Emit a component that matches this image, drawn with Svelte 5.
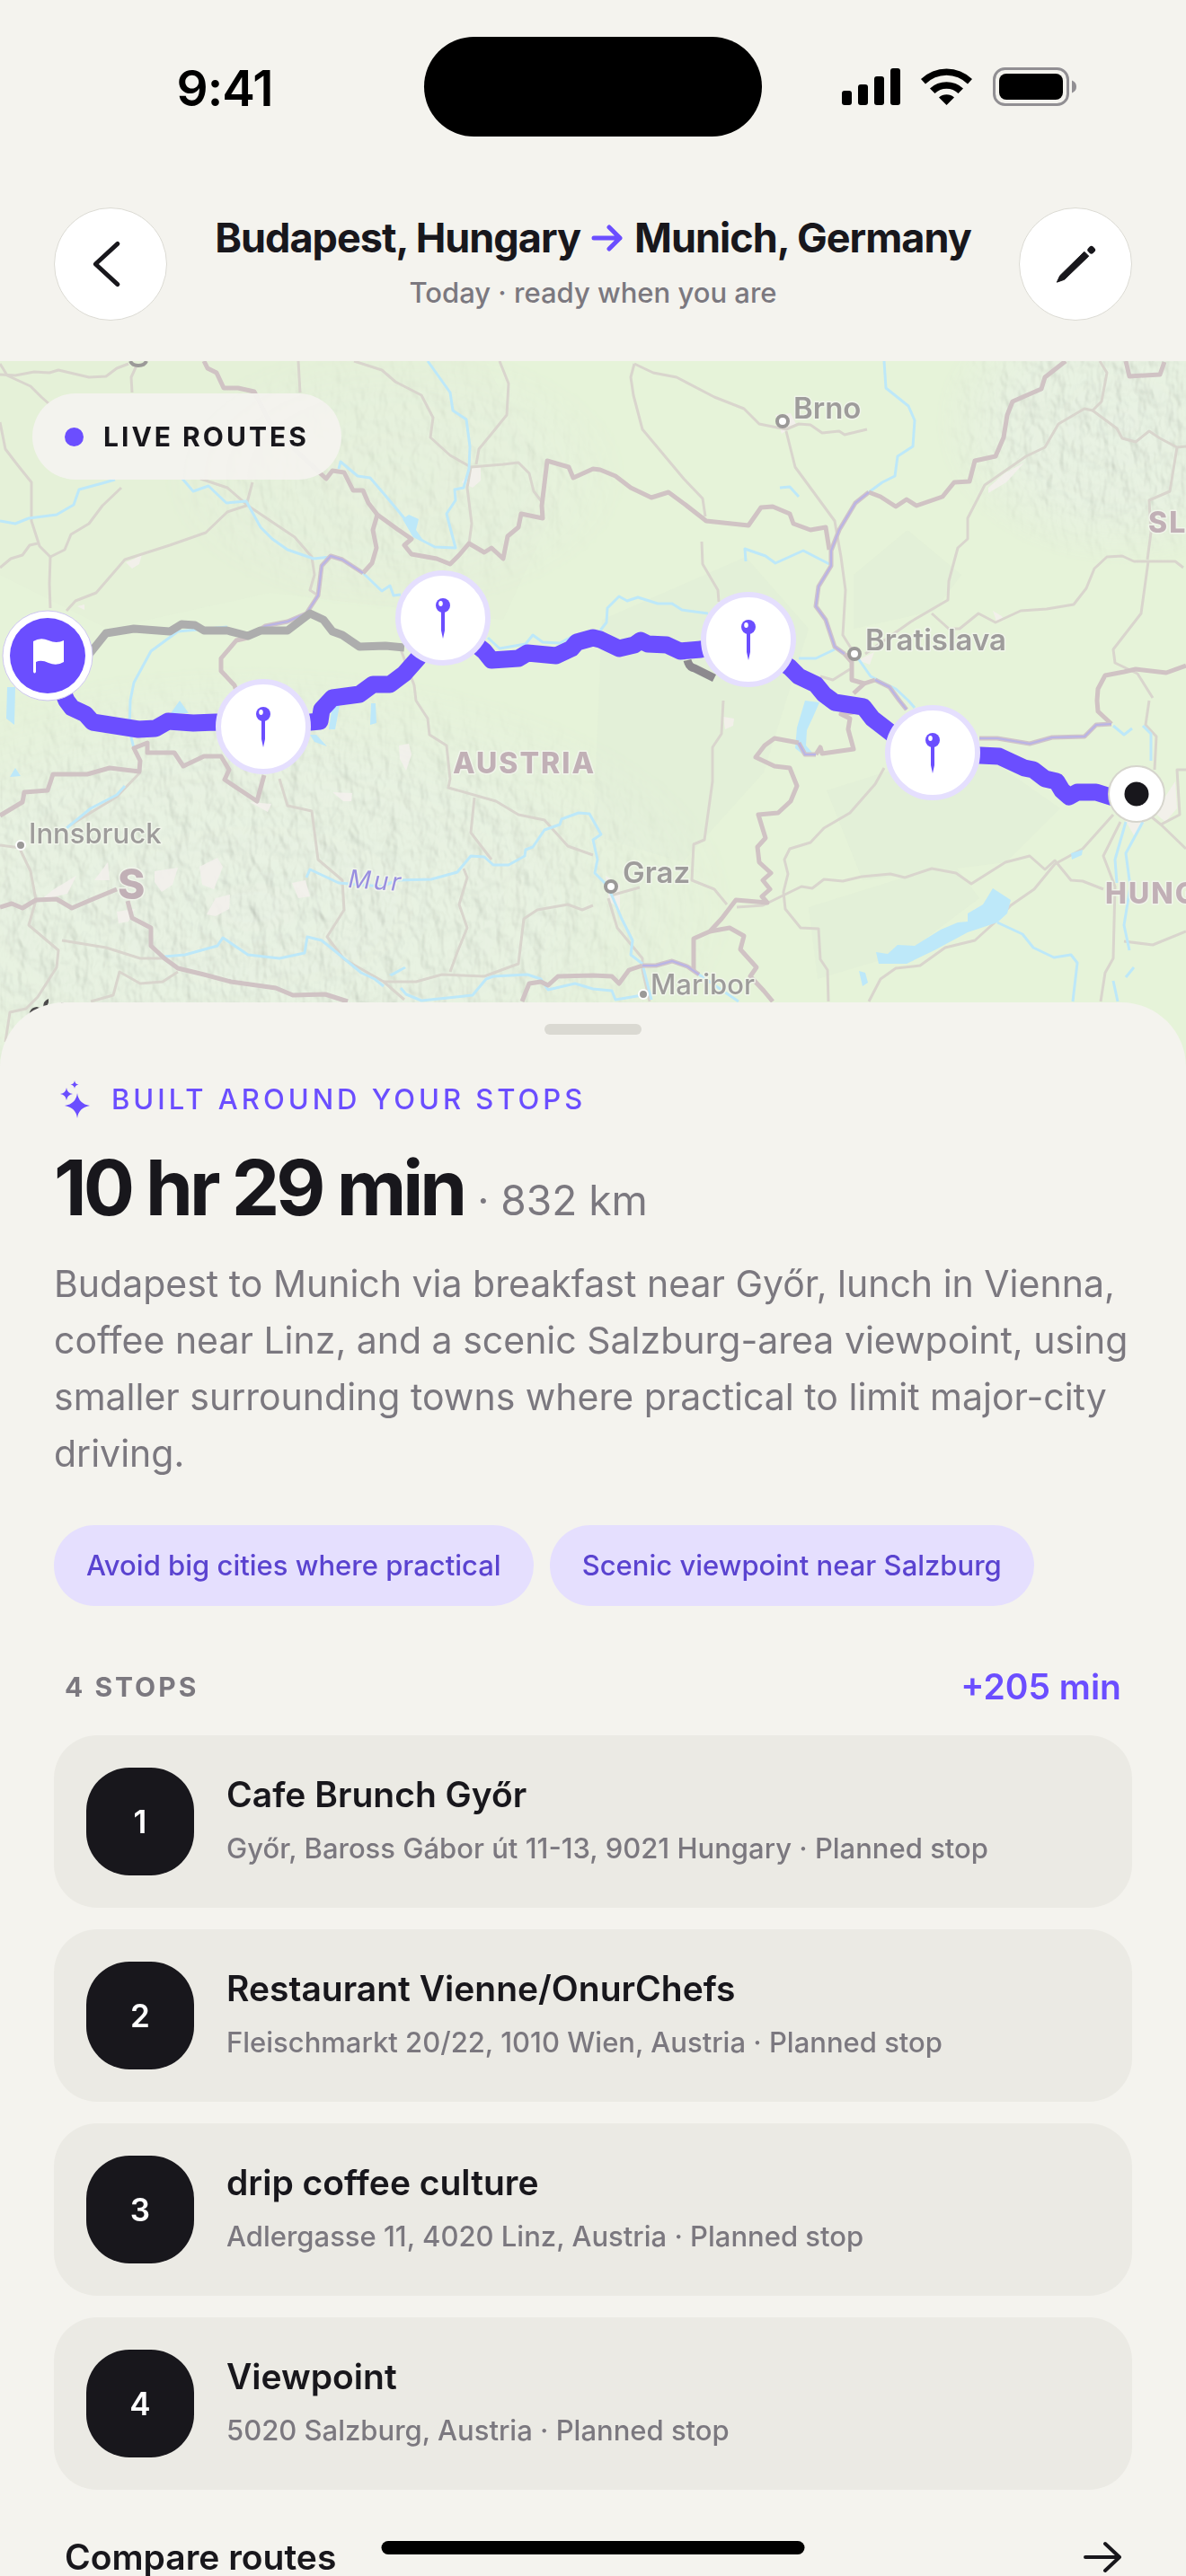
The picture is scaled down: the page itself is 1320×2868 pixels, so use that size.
<script lang="ts">
    type Stop = { name: string; detail: string };
    type Place = { name: string; x: number; y: number; dx: number; dy: number; capital: boolean };

    const from = "Budapest, Hungary";
    const to = "Munich, Germany";

    const chips: string[] = ["Avoid big cities where practical", "Scenic viewpoint near Salzburg"];

    const stops: Stop[] = [
        { name: "Cafe Brunch Győr", detail: "Győr, Baross Gábor út 11-13, 9021 Hungary · Planned stop" },
        { name: "Restaurant Vienne/OnurChefs", detail: "Fleischmarkt 20/22, 1010 Wien, Austria · Planned stop" },
        { name: "drip coffee culture", detail: "Adlergasse 11, 4020 Linz, Austria · Planned stop" },
        { name: "Viewpoint", detail: "5020 Salzburg, Austria · Planned stop" },
    ];

    const pins = [
        { x: 293, y: 809 },
        { x: 493, y: 688 },
        { x: 833, y: 712 },
        { x: 1038, y: 838 },
    ];

    const places: Place[] = [
        { name: "Brno", x: 871, y: 469, dx: 12, dy: -3, capital: true },
        { name: "Bratislava", x: 951, y: 728, dx: 12, dy: -4, capital: true },
        { name: "Graz", x: 680, y: 987, dx: 13, dy: -4, capital: true },
        { name: "Maribor", x: 716, y: 1107, dx: 8, dy: 0, capital: false },
        { name: "Innsbruck", x: 23, y: 941, dx: 9, dy: -2, capital: false },
    ];

    const mainRoute =
        "53,730 74,780 80,788 95,795 103,804 154,812 173,811 187,803 215,805 240,804 293,809 356,803 358,790 370,777 400,773 415,762 434,762 450,750 465,733 493,688 539,725 547,735 577,733 587,727 619,730 636,722 642,715 660,710 668,712 689,722 706,718 713,713 721,717 742,718 757,725 780,723 833,712 879,743 889,753 908,762 917,773 929,782 961,787 971,800 993,817 1038,838 1091,841 1112,842 1140,855 1150,857 1163,867 1176,870 1182,880 1190,887 1199,882 1220,882 1239,888 1265,884";
    const altRoute =
        "98,730 118,705 149,700 189,703 202,695 217,696 227,702 253,702 276,708 290,702 320,702 345,683 360,690 370,703 381,707 400,720 429,719 450,721";

    const borders: string[] = [
        "227,402 231,410 241,415 249,432 265,432 283,436 300,470 320,493 349,520 363,533 370,524 383,526 393,546 404,546 410,560 420,573 442,589 458,600 450,607 458,617 486,622 501,628 511,618 522,605 539,615 547,610 560,622 565,597 577,587 580,572 604,577 603,563 609,513 633,520 638,532 660,522 668,523 685,530 702,543 725,554 744,548 763,562 786,580 833,585 847,565 860,564 879,572 883,583 902,590 919,587 923,612",
        "420,573 415,590 419,610 414,627 404,638",
        "276,710 263,713 246,733 246,747 261,763 270,790",
        "1186,402 1163,420 1159,433 1127,447 1121,462 1117,487 1108,508 1085,513 1079,536 1062,537 1049,553 1020,563 1009,556 997,564 980,553 967,548",
        "940,728 948,737 948,757 962,761 950,772",
        "962,761 974,757",
        "1237,806 1222,792 1221,780 1222,767 1230,752 1251,748 1264,745 1298,749 1320,741",
        "1253,402 1257,419 1291,417 1296,403",
        "0,908 25,893 27,882 53,880 59,862 97,862 122,855 155,859 156,847 149,833 164,827 164,838 194,838 204,853 227,842 246,842 255,857 250,868 286,892 294,863",
        "0,1010 13,1006 25,1011 40,1002 63,1001 80,1011 101,1002 130,990",
        "142,1003 147,1022 168,1033 168,1053 183,1067 198,1078 227,1085 257,1093 307,1100 326,1108 362,1107 387,1115",
        "581,1115 589,1095 602,1093 610,1097 621,1087 660,1086 681,1087 689,1095 700,1080 715,1075",
        "772,1080 772,1045 790,1037 803,1023 819,1002 854,1005 848,998 857,990 849,980 858,972 845,960 843,943 852,933 844,907 866,905 880,892 887,875 879,855 862,853 841,843 851,830 862,822 889,827",
        "908,840 913,832 915,839 950,834 944,812 946,800 936,795 950,793",
        "790,1037 812,1033 828,1042 824,1057 842,1077 835,1087 850,1103 860,1115",
    ];

    const riverBorders: string[] = [
        "404,638 381,623 368,619 358,630 354,663 341,683 320,692 295,697 276,710",
        "967,548 952,560 934,590 925,613 925,630 911,653 908,675 919,690 924,705 929,720 940,728",
        "974,757 990,765 1001,780 1009,790",
        "1090,822 1110,822 1146,828 1171,821 1207,820 1220,807 1237,806",
        "715,1075 730,1075 748,1070 765,1076 778,1085",
        "889,827 896,840 908,840",
    ];

    const rivers: string[] = [
        "0,580 17,583 32,577 63,573 82,562 88,545 114,538 128,534",
        "203,533 215,547 232,541 252,560 274,558 290,587 303,600 320,612 349,622 368,620",
        "404,638 425,658 434,652 438,663 446,662",
        "476,402 501,437 504,457 519,467 523,497 522,522 516,543 506,545 507,557 497,572 507,610 484,609 461,597 450,577 430,553 412,532 398,530 379,514 377,522",
        "543,710 556,722 585,717 593,707 604,715 623,716 640,707",
        "253,698 198,703 168,725 149,760 145,780 144,813 149,833",
        "984,402 986,432 1011,452 1018,468 1016,497 999,508 996,530 982,537 967,548",
        "830,625 829,611 852,619 863,627 894,613 923,628",
        "668,702 675,693 676,677 689,664 698,669 710,665 732,672 748,672 759,679 788,683",
        "889,733 908,733 929,723",
        "955,733 969,753 997,767 1011,780 1018,788",
        "74,922 101,900 130,885 139,875",
        "341,977 345,968 377,983 425,987 442,980 480,979 509,971 524,953 539,954 549,963 566,963 584,953 585,946 593,943 606,924 623,918 625,912 644,905 656,906 669,929 660,935 665,957 662,972 673,983 681,997 692,1023 704,1047 702,1063 715,1073 725,1113",
        "183,1065 206,1063 242,1053 248,1044 276,1063 311,1067 339,1061 342,1043 358,1047 373,1059 402,1083 417,1090 427,1098",
        "446,1100 452,1107 469,1114 526,1108 541,1090 549,1087 587,1085 602,1090 610,1102 627,1098 640,1095 660,1101 681,1103 685,1113 715,1108",
        "778,1085 822,1115",
        "1110,1027 1138,1040 1150,1055 1173,1066 1192,1063 1199,1072 1194,1115",
        "1272,915 1253,950 1258,987 1251,1030 1257,1058",
        "1262,1077 1253,1088",
        "1239,1092 1244,1115",
        "1253,915 1241,957 1243,983",
        "1239,808 1251,818 1260,811",
        "1272,808 1281,817 1281,847",
        "868,543 879,542 889,553",
    ];

    const lakes: string[] = [
        "896,780 912,782 905,798 898,813 897,830 906,840 896,842 885,833 887,810",
        "975,1060 988,1062 999,1052 1018,1053 1047,1035 1066,1027 1077,1026 1077,1017 1094,1007 1105,989 1125,1002 1121,1017 1110,1027 1077,1038 1040,1058 1009,1073 978,1073",
        "448,578 455,573 466,578 463,590 470,600 460,598",
        "8,765 17,765 16,807 7,800",
        "200,780 210,794 190,794",
        "413,783 418,783 419,805 412,807",
        "370,785 378,785 373,812 366,812",
        "345,818 352,818 364,831 350,826",
        "17,855 23,864 11,865",
        "1192,950 1205,946 1204,952 1193,957",
        "956,1081 963,1083 966,1094 960,1098",
        "433,1085 450,1076 452,1078 436,1087",
    ];

    const roads: string[] = [
        "0,417 17,418 38,414 55,415 65,412 99,420 118,419 130,410 143,405",
        "0,405 8,418 34,430 46,442 55,450",
        "147,437 146,420 152,407",
        "332,402 334,437",
        "0,470 6,500 19,517 35,537 35,580 44,608 56,620 55,650 56,677",
        "56,620 72,612 79,595 99,583 114,563 135,543",
        "0,632 12,622 25,618 33,607 42,605",
        "74,680 84,669 107,660 120,645 139,623 189,607 229,593 253,570 274,563 281,537",
        "223,533 253,543 276,563 328,598 347,620 350,640 345,657 354,663",
        "394,402 425,412 440,425 469,440 482,465 479,487 501,507 524,520 560,517 577,515 589,527 594,547 604,560",
        "556,402 566,427 564,462 547,483 533,500 530,517",
        "524,520 520,543 525,583 522,605",
        "446,723 461,763 463,780 476,800 478,818 497,830 501,867 499,877 552,892 577,907 606,913 632,942 660,952",
        "528,888 524,927 547,957",
        "516,967 520,977 511,1007 520,1033 509,1060 501,1082",
        "706,405 702,420 705,440 715,478 761,533 782,555 785,575",
        "706,405 727,415 753,420 795,442 828,455 845,472 875,478 889,472 902,473 915,482 934,480 940,484 965,478",
        "875,480 885,520 929,580 936,620 941,657 938,707 948,723",
        "781,603 782,628 799,657 800,670",
        "1224,402 1232,415 1226,447 1216,457 1207,455 1178,472 1163,498 1142,508 1096,540 1077,577 1077,600 1066,610 1056,647 1055,668 1014,692 963,728",
        "1216,457 1243,477 1249,488 1264,492 1279,480 1291,488 1310,498 1320,497",
        "1310,498 1302,547 1279,557 1281,593 1277,623",
        "1037,683 1056,700 1068,700 1089,683 1108,693 1136,680 1165,678 1195,673 1209,655 1218,633 1232,620 1249,619 1262,625 1308,625 1317,632",
        "1278,625 1270,683 1239,723 1241,738 1266,750 1283,777",
        "913,753 927,757 946,745",
        "805,780 803,817 793,832 793,870 784,935 772,940 770,980 795,990 809,1007",
        "680,997 694,993 712,988",
        "984,855 974,873 946,905 917,922 902,938 879,945 873,957 877,973 872,993 874,1012 891,1033 911,1034 913,1068 921,1080 922,1115",
        "820,1010 849,1008 892,987 904,989 917,979 938,981 959,976 991,973 1007,977 1037,967 1064,972 1081,984 1119,960 1146,953 1163,968 1174,958 1192,980 1205,981 1228,990",
        "1239,907 1205,945 1174,962 1151,990 1125,1008 1106,1028 1085,1047 1052,1055 1024,1075 997,1078 980,1090 967,1115",
        "1247,915 1228,953 1241,987 1239,1067 1230,1083 1225,1115",
        "1276,905 1292,918 1320,945",
        "1292,918 1313,907 1310,857 1320,857",
        "1251,1048 1283,1052 1320,1037",
        "1279,780 1275,807 1287,820 1285,857",
        "677,1000 687,1033 715,1067 715,1080 723,1115",
        "0,941 23,944 23,947 34,970 40,1002 32,1030 65,1058 63,1077 42,1110 29,1123 11,1127 6,1160",
        "69,1047 118,1055 156,1067 183,1067",
        "311,867 320,897 347,903 354,957 381,980 383,1013 364,1043 383,1068 427,1093 450,1113",
        "427,1093 463,1093 492,1085 539,1087 577,1073 583,1023 598,1013 632,1007 648,1013 660,1008",
        "156,860 130,887 76,920",
        "198,1082 181,1093 156,1095 133,1082 126,1108 101,1115",
    ];

    const towns: string[] = [
        "140,626 150,622 158,617 155,628 147,633",
        "86,675 94,673 94,679",
        "526,520 535,518 535,535 526,543 514,537",
        "1105,680 1115,686 1117,691 1109,692",
        "1100,543 1118,527 1140,515 1120,537 1100,549",
        "444,830 455,828 458,840 452,858 445,845",
        "370,882 392,883 391,892 382,892",
        "60,990 85,975 75,995 45,1002",
        "105,980 120,960 122,980",
        "172,970 198,966 192,985 180,993 172,982",
        "222,965 242,955 248,965 238,990 225,985",
        "240,1000 256,996 255,1012 240,1020 230,1018",
        "130,1015 150,1012 143,1026 132,1028",
        "325,983 340,980 345,998 332,1000",
        "278,893 302,895 298,904",
        "863,462 880,460 886,472 870,483",
        "805,798 817,800 816,808 807,812",
        "1285,905 1308,870 1310,900 1297,915",
        "1245,900 1278,910 1262,930",
        "674,975 690,985 690,1013 678,1003",
        "955,735 973,726 968,740",
        "1085,1012 1098,1006 1080,1018",
    ];

    const openEditor = () => console.log("Edit trip");
    const goBack = () => history.back();
</script>

<main class="screen">
    <div class="status-bar">
        <span class="time">9:41</span>
        <span class="island"></span>
        <svg class="status-icons" viewBox="0 0 262 44" aria-hidden="true">
            <rect x="0" y="26" width="11" height="16" rx="3" />
            <rect x="18" y="19" width="11" height="23" rx="3" />
            <rect x="36" y="10" width="11" height="32" rx="3" />
            <rect x="54" y="1" width="11" height="41" rx="3" />
            <path d="M88 13a41 41 0 0 1 57 0l-5 5.500a33 33 0 0 0-47 0z" />
            <path d="M98 23.500a27 27 0 0 1 37 0l-5.500 5.500a19 19 0 0 0-26 0z" />
            <path d="M108 33.500a13 13 0 0 1 17 0l-8.500 8.500z" />
            <rect x="169.500" y="1.500" width="82" height="40" rx="12" fill="none" stroke="#918f93" stroke-width="3" />
            <rect x="175" y="7" width="71" height="29" rx="8" />
            <path d="M256 14.500q5 2 5 7t-5 7z" fill="#918f93" />
        </svg>
    </div>

    <header class="trip-header">
        <button class="round-button" aria-label="Back" on:click={goBack}>
            <svg viewBox="0 0 126 126" aria-hidden="true">
                <path d="M71 40 46 63l25 23" fill="none" stroke="currentColor" stroke-width="5" stroke-linecap="round" stroke-linejoin="round" />
            </svg>
        </button>
        <div class="trip-title">
            <h1>
                <span>{from}</span>
                <svg viewBox="0 0 36 30" aria-label="to">
                    <path d="M3 15h29M20 3l12 12-12 12" fill="none" stroke="currentColor" stroke-width="5" stroke-linecap="round" stroke-linejoin="round" />
                </svg>
                <span>{to}</span>
            </h1>
            <p>Today · ready when you are</p>
        </div>
        <button class="round-button" aria-label="Edit trip" on:click={openEditor}>
            <svg viewBox="0 0 126 126" aria-hidden="true">
                <path d="M42 83.500 45.500 76 73 49l5 5-27.500 26.500z" fill="currentColor" stroke="currentColor" stroke-linejoin="round" />
                <rect x="77" y="43" width="8" height="8" rx="3" transform="rotate(45 81 47)" fill="currentColor" />
            </svg>
        </button>
    </header>

    <section class="map" aria-label="Route map">
        <svg viewBox="0 402 1320 786">
            <defs>
                <radialGradient id="alps">
                    <stop offset="0" stop-color="#fff" />
                    <stop offset="0.600" stop-color="#fff" stop-opacity="0.800" />
                    <stop offset="1" stop-color="#fff" stop-opacity="0" />
                </radialGradient>
                <mask id="highland">
                    <ellipse cx="280" cy="1010" rx="540" ry="270" fill="url(#alps)" />
                    <ellipse cx="1250" cy="470" rx="210" ry="160" fill="url(#alps)" />
                    <ellipse cx="440" cy="530" rx="260" ry="150" fill="url(#alps)" opacity="0.500" />
                </mask>
                <filter id="relief" x="0" y="0" width="100%" height="100%">
                    <feTurbulence type="fractalNoise" baseFrequency="0.055 0.035" numOctaves="3" seed="7" />
                    <feDiffuseLighting surfaceScale="8" lighting-color="#fff">
                        <feDistantLight azimuth="320" elevation="60" />
                    </feDiffuseLighting>
                </filter>
            </defs>

            <rect y="402" width="1320" height="786" fill="#e6f3d9" />
            <g fill="#dfecd6" opacity="0.400">
                <path d="M0 402H540L620 560 560 690 300 660 120 700 0 640z" opacity="0.500" />
                <path d="M950 640 1010 590 1070 640 1040 680 950 700zM920 880 1080 830 1180 900 1120 960 960 980zM900 1010 1060 960 1090 1000 1010 1060 910 1090z" />
                <path d="M670 690 830 620 900 700 850 860 760 960 660 930z" />
            </g>
            <g mask="url(#highland)">
                <rect y="402" width="1320" height="786" fill="#e8f1e3" />
                <rect class="relief" y="402" width="1320" height="786" filter="url(#relief)" />
            </g>

            <g fill="#f3f0ec" opacity="0.900">
                {#each towns as points}
                    <polygon {points} />
                {/each}
            </g>
            <g class="line" stroke="#d9d5cd" stroke-width="3">
                {#each roads as points}
                    <polyline {points} />
                {/each}
            </g>
            <g class="line" stroke="#bde8f9" stroke-width="3">
                {#each rivers as points}
                    <polyline {points} />
                {/each}
            </g>
            <g fill="#bde8f9">
                {#each lakes as points}
                    <polygon {points} />
                {/each}
            </g>
            <g class="line" stroke="#d0c3c4" stroke-width="5">
                {#each borders as points}
                    <polyline {points} />
                {/each}
            </g>
            {#each riverBorders as points}
                <polyline class="line" {points} stroke="#cfc3ca" stroke-width="5" />
                <polyline class="line" {points} stroke="#b9b3e6" stroke-width="2" />
            {/each}

            {#each places as place}
                <circle cx={place.x} cy={place.y} r={place.capital ? 6 : 5} fill={place.capital ? "#fff" : "#9b9998"} stroke={place.capital ? "#9b9998" : "#fff"} stroke-width={place.capital ? 4 : 2} />
                <text class="city" class:minor={!place.capital} x={place.x + place.dx} y={place.y + place.dy}>{place.name}</text>
            {/each}
            <text class="country" x="504" y="861">AUSTRIA</text>
            <text class="country" x="1230" y="1006">HUNGARY</text>
            <text class="country" x="1278" y="593">SLOVAKIA</text>
            <text class="country wide" x="131" y="1001">S</text>
            <text class="river" x="387" y="988" transform="rotate(4 387 988)">Mur</text>

            <path d="M145 402q2 5 9 5t9-5" fill="none" stroke="#9b9998" stroke-width="4" />
            <path d="M48 1122q0-8 6-10 1 8-6 10zM32 1136q-1-14 9-15 5 2 9 0 6-1 9 3l-20 20z" fill="#4c4a4b" />
            <path d="M68 1119v-3h8v3z" fill="#4c4a4b" />

            <polyline class="line" points={altRoute} stroke="#adadad" stroke-width="9" />
            <path class="line" d="M765 735q2 8 8 9l22 11" stroke="#8c898e" stroke-width="9" />
            <polyline class="line" points={mainRoute} stroke="#6b4eff" stroke-width="19" />

            {#each pins as pin}
                <g transform="translate({pin.x} {pin.y})">
                    <circle r="50" fill="#fff" stroke="#e5dffe" stroke-width="6" />
                    <path d="M-2-8h4v22l-2 9-2-9z" fill="#6b4eff" />
                    <circle cy="-14" r="8" fill="#6b4eff" />
                    <ellipse cx="-2.500" cy="-16" rx="2.300" ry="3" fill="#fff" />
                </g>
            {/each}

            <g transform="translate(53 730)">
                <circle r="50" fill="#fff" stroke="#cdc6ef" stroke-width="1" />
                <circle r="42" fill="#6b4eff" />
                <path d="M-16-16q8-5 17-1 9 4 17 0v24q-8 5-17 1-8-4-14-1v11q-1.500 3-3 0z" fill="#fff" />
            </g>
            <g transform="translate(1265 884)">
                <circle r="31" fill="#fff" stroke="#d6d5cd" stroke-width="2" />
                <circle r="13.500" fill="#18171c" />
            </g>
        </svg>
        <div class="live-badge"><span class="dot"></span>LIVE ROUTES</div>
    </section>

    <section class="sheet">
        <div class="handle"></div>

        <p class="eyebrow">
            <svg viewBox="0 0 36 42" aria-hidden="true">
                <path d="M20 14q1.500 12 14 14-12.500 2-14 14-1.500-12-14-14 12.500-2 14-14zM8 8q.8 6 7 7-6.200 1-7 7-.8-6-7-7 6.200-1 7-7zM17 0q.5 4 4.500 4.500-4 .5-4.500 4.500-.5-4-4.500-4.500 4-.5 4.500-4.500z" fill="currentColor" />
            </svg>
            BUILT AROUND YOUR STOPS
        </p>

        <div class="summary">
            <strong>10 hr 29 min</strong>
            <span>· 832 km</span>
        </div>

        <p class="description">
            Budapest to Munich via breakfast near Győr, lunch in Vienna, coffee near Linz, and a scenic
            Salzburg-area viewpoint, using smaller surrounding towns where practical to limit major-city driving.
        </p>

        <ul class="chips">
            {#each chips as chip}
                <li>{chip}</li>
            {/each}
        </ul>

        <div class="stops-header">
            <h2>{stops.length} STOPS</h2>
            <span>+205 min</span>
        </div>

        <ol class="stops">
            {#each stops as stop, i}
                <li>
                    <span class="number">{i + 1}</span>
                    <div>
                        <h3>{stop.name}</h3>
                        <p>{stop.detail}</p>
                    </div>
                </li>
            {/each}
        </ol>

        <button class="compare">
            Compare routes
            <svg viewBox="0 0 42 36" aria-hidden="true">
                <path d="M2 18h38M24 3l16 15-16 15" fill="none" stroke="currentColor" stroke-width="4" stroke-linecap="round" stroke-linejoin="round" />
            </svg>
        </button>
    </section>

    <div class="home-indicator"></div>
</main>

<style>
    :global(body) {
        margin: 0;
        background: #f4f3ee;
    }

    .screen {
        position: relative;
        height: 100vh;
        overflow: hidden;
        background: #f4f3ee;
        color: #18171c;
        font-family: Inter, "Liberation Sans", sans-serif;
    }

    h1, h2, h3, p, ul, ol {
        margin: 0;
        padding: 0;
        list-style: none;
    }

    button {
        border: none;
        padding: 0;
        background: none;
        color: inherit;
        font: inherit;
        cursor: pointer;
    }

    .status-bar {
        display: grid;
        grid-template-columns: 1fr 376px 1fr;
        align-items: center;
        height: 111px;
        padding-top: 41px;
        color: #000;
    }

    .time {
        justify-self: center;
        padding: 2px 0 0 28px;
        font-size: 55px;
        font-weight: 600;
        letter-spacing: -1px;
    }

    .island {
        height: 111px;
        border-radius: 56px;
        background: #000;
    }

    .status-icons {
        width: 262px;
        height: 44px;
        margin-left: 89px;
    }

    .trip-header {
        display: grid;
        grid-template-columns: 126px 1fr 126px;
        align-items: center;
        padding: 79px 60px 45px;
    }

    .round-button {
        box-sizing: border-box;
        height: 126px;
        border: 1px solid #dcdbd4;
        border-radius: 50%;
        background: #fff;
    }

    .round-button svg {
        display: block;
        width: 100%;
    }

    .trip-title {
        text-align: center;
        padding-bottom: 6px;
    }

    h1 {
        display: flex;
        justify-content: center;
        align-items: center;
        gap: 12px;
        font-size: 45px;
        line-height: 60px;
        font-weight: 700;
        letter-spacing: -1px;
    }

    h1 svg {
        width: 36px;
        height: 30px;
        color: #6b4eff;
    }

    .trip-title p {
        font-size: 31px;
        line-height: 42px;
        font-weight: 500;
        color: #7b787f;
        padding-top: 10px;
    }

    .map {
        position: relative;
    }

    .map > svg {
        display: block;
        width: 100%;
        overflow: hidden;
    }

    .relief {
        mix-blend-mode: multiply;
        opacity: 0.2;
    }

    .line {
        fill: none;
        stroke-linejoin: round;
    }

    .city, .country, .river {
        paint-order: stroke;
        stroke: #f0f5ea;
        stroke-width: 3px;
        stroke-linejoin: round;
    }

    .city {
        font-size: 33px;
        font-weight: 600;
        fill: #9e9c9b;
    }

    .city.minor {
        font-size: 31px;
        font-weight: 500;
    }

    .country {
        font-size: 32px;
        font-weight: 800;
        letter-spacing: 2px;
        fill: #c1b0b6;
    }

    .country.wide {
        font-size: 46px;
    }

    .river {
        font-size: 28px;
        font-style: italic;
        letter-spacing: 3px;
        fill: #998fe0;
    }

    .live-badge {
        position: absolute;
        top: 36px;
        left: 36px;
        display: flex;
        align-items: center;
        gap: 22px;
        height: 96px;
        padding: 0 36px;
        border-radius: 48px;
        background: rgba(244, 243, 238, 0.96);
        font-size: 30px;
        font-weight: 700;
        letter-spacing: 3px;
    }

    .dot {
        width: 21px;
        height: 21px;
        border-radius: 50%;
        background: #6b4eff;
    }

    .sheet {
        position: relative;
        margin-top: -72px;
        padding: 24px 60px 0;
        border-radius: 72px 72px 0 0;
        background: #f4f3ee;
    }

    .handle {
        width: 108px;
        height: 12px;
        margin: 0 auto 48px;
        border-radius: 6px;
        background: #dad9d2;
    }

    .eyebrow {
        display: flex;
        align-items: center;
        gap: 22px;
        padding-left: 6px;
        font-size: 31px;
        line-height: 48px;
        font-weight: 500;
        letter-spacing: 4px;
        color: #6b4eff;
    }

    .eyebrow svg {
        width: 36px;
        height: 42px;
    }

    .summary {
        display: flex;
        align-items: baseline;
        gap: 15px;
        margin-top: 24px;
    }

    .summary strong {
        font-size: 85px;
        line-height: 102px;
        font-weight: 700;
        letter-spacing: -4px;
    }

    .summary span {
        font-size: 46px;
        line-height: 60px;
        color: #7b787f;
    }

    .description {
        margin-top: 24px;
        font-size: 41px;
        line-height: 63px;
        color: #7b787f;
    }

    .chips {
        display: flex;
        flex-wrap: wrap;
        gap: 18px;
        margin-top: 48px;
    }

    .chips li {
        padding: 0 36px;
        border-radius: 45px;
        background: #e5dffe;
        font-size: 31px;
        line-height: 90px;
        font-weight: 500;
        color: #5a43d0;
    }

    .stops-header {
        display: flex;
        justify-content: space-between;
        align-items: center;
        padding: 60px 12px 24px;
        line-height: 60px;
    }

    .stops-header h2 {
        font-size: 30px;
        font-weight: 700;
        letter-spacing: 3px;
        color: #7b787f;
    }

    .stops-header span {
        font-size: 39px;
        font-weight: 600;
        color: #6b4eff;
    }

    .stops {
        display: grid;
        gap: 24px;
    }

    .stops li {
        display: flex;
        align-items: center;
        gap: 36px;
        padding: 36px;
        border-radius: 48px;
        background: #ebeae4;
    }

    .number {
        display: grid;
        place-items: center;
        flex: none;
        width: 120px;
        height: 120px;
        border-radius: 48px;
        background: #18171c;
        color: #fff;
        font-size: 35px;
        font-weight: 600;
    }

    h3 {
        font-size: 39px;
        line-height: 54px;
        font-weight: 600;
    }

    .stops p {
        margin-top: 6px;
        font-size: 31px;
        line-height: 54px;
        font-weight: 500;
        color: #7b787f;
    }

    .compare {
        display: flex;
        justify-content: space-between;
        align-items: center;
        width: 100%;
        padding: 48px 12px;
        font-size: 39px;
        line-height: 54px;
        font-weight: 600;
    }

    .compare svg {
        width: 42px;
        height: 36px;
    }

    .home-indicator {
        position: absolute;
        bottom: 24px;
        left: 50%;
        width: 471px;
        height: 15px;
        border-radius: 8px;
        background: #000;
        transform: translateX(-50%);
    }
</style>
